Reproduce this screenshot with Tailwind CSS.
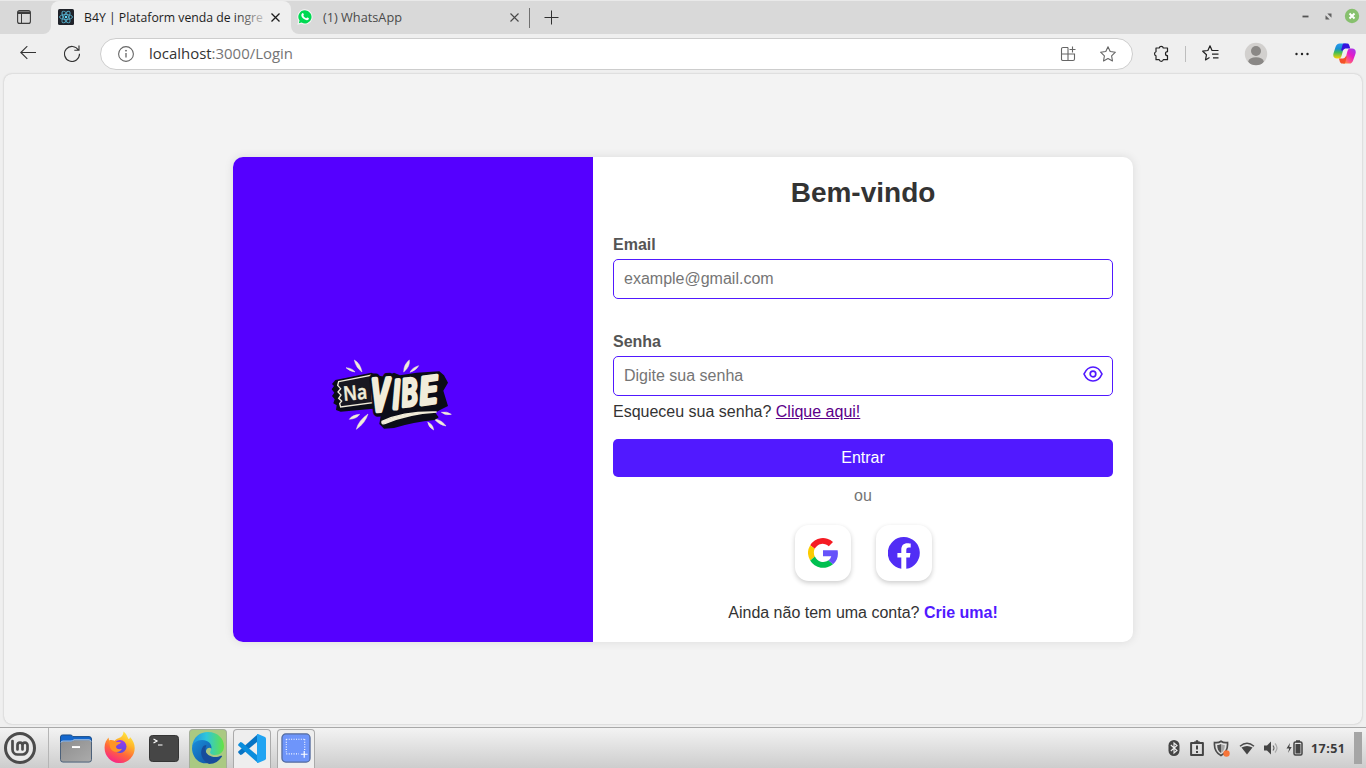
<!DOCTYPE html>
<html lang="pt-BR">
<head>
<meta charset="utf-8">
<title>B4Y | Plataform venda de ingressos</title>
<script src="https://cdn.jsdelivr.net/npm/@tailwindcss/browser@4"></script>
</head>
<body class="flex h-[768px] w-[1366px] flex-col overflow-hidden bg-[#efefef] font-['Liberation_Sans',Arial,sans-serif] text-[#333]">

<!-- Tab strip -->
<div class="flex h-[34px] shrink-0 border-t border-[#e9e9e9] bg-[#efefef] font-['Open_Sans','Noto_Sans',sans-serif]">
  <div class="flex w-[51px] rounded-br-lg bg-[#d9d9d9] pt-[9px] pl-[17px]">
    <svg width="14" height="14" viewBox="0 0 14 14" fill="none" stroke="#3b3b3b"><rect x=".6" y=".6" width="12.8" height="12.8" rx="2" stroke-width="1.1"/><path d="M1 2.3h12M1 3.3h12" stroke-width="1.5"/><path d="M4.5 4v9"/></svg>
  </div>
  <div class="bg-[#d9d9d9]">
    <div class="flex h-[33px] w-[240px] items-center rounded-t-lg bg-[#efefef] pl-[7px]">
      <svg class="-mt-px shrink-0" width="16" height="16" viewBox="0 0 32 32"><rect width="32" height="32" rx="3" fill="#20232a"/><g fill="none" stroke="#53a9c5" stroke-width="1.9"><ellipse cx="16" cy="16" rx="13" ry="5"/><ellipse cx="16" cy="16" rx="13" ry="5" transform="rotate(60 16 16)"/><ellipse cx="16" cy="16" rx="13" ry="5" transform="rotate(120 16 16)"/></g><circle cx="16" cy="16" r="2.5" fill="#61dafb"/></svg>
      <svg class="ml-[10px] shrink-0" width="183" height="24" viewBox="0 0 183 24"><defs><linearGradient id="fade" gradientUnits="userSpaceOnUse" x1="150" x2="182" y1="0" y2="0"><stop stop-color="#1b1b1b"/><stop offset="1" stop-color="#1b1b1b" stop-opacity=".15"/></linearGradient></defs><text x="0" y="15.500" font-size="12.500" textLength="179" lengthAdjust="spacingAndGlyphs" fill="url(#fade)">B4Y | Plataform venda de ingre</text></svg>
      <svg class="ml-[4px] shrink-0" width="9" height="9" viewBox="0 0 9 9" stroke="#1c1c1c" stroke-width="1.300"><path d="M.5.5l8 8M8.500.5l-8 8"/></svg>
    </div>
  </div>
  <div class="flex flex-1 items-center rounded-bl-lg bg-[#d9d9d9] pl-[6px]">
    <svg class="-mt-px" width="16" height="16" viewBox="0 0 16 16"><path d="M8 .3a7.600 7.600 0 1 1-3.500 14.400L.4 15.700l1-4A7.600 7.600 0 0 1 8 .3z" fill="#f6f6f6"/><path d="M8 1.300a6.600 6.600 0 1 1-3.400 12.300L1.800 14.300l.7-2.700A6.600 6.600 0 0 1 8 1.300z" fill="#00d952"/><path d="M4.800 4.800c.6-1 1.400-.8 1.700 0 .5 1 .4 1.100-.2 1.900.7 1.300 1.500 2 2.900 2.600.8-.8.800-1.100 1.500-.7 1.500.6 1.300.8 1 1.600-.6 1-2 1.200-3.300.6-2-.8-3.300-2.200-4-3.800-.2-.7-.1-1.500.4-2.200z" fill="#fff"/></svg>
    <svg class="ml-[10px]" width="90" height="24" viewBox="0 0 90 24"><text x="0" y="15.500" font-size="12.500" textLength="79" lengthAdjust="spacingAndGlyphs" fill="#4a4a4a">(1) WhatsApp</text></svg>
    <svg class="ml-[97px]" width="9" height="9" viewBox="0 0 9 9" stroke="#484848" stroke-width="1.100"><path d="M.5.5l8 8M8.500.5l-8 8"/></svg>
    <div class="ml-[10px] h-5 w-px bg-[#707070]"></div>
    <svg class="-mt-px ml-[14px]" width="15" height="15" viewBox="0 0 15 15" stroke="#303030"><path d="M7.500.5v14M.5 7.500h14"/></svg>
    <div class="-mt-[3px] ml-auto flex items-center pr-[6px]">
      <svg width="7" height="7" viewBox="0 0 7 7"><path d="M.5 3.500h6" stroke="#555" stroke-width="1.800"/></svg>
      <svg class="ml-[16px]" width="7" height="7" viewBox="0 0 7 7" fill="#606060"><path d="M2.300.5h4.200v4.200zM.5 2.300v4.200h4.200z"/></svg>
      <svg class="ml-[12px]" width="16" height="16" viewBox="0 0 16 16"><circle cx="8" cy="8" r="7.200" fill="#87c06e"/><path d="M5.500 5.500l5 5m0-5l-5 5" stroke="#fff" stroke-width="2"/></svg>
    </div>
  </div>
</div>

<!-- Toolbar -->
<div class="flex h-[39px] shrink-0 items-center pl-[20px] font-['Open_Sans','Noto_Sans',sans-serif]">
  <svg class="-mt-px" width="16" height="14" viewBox="0 0 16 14" fill="none" stroke="#333" stroke-width="1.100"><path d="M16 6.500H.8M7.300.2L.8 6.500l6.500 6.400"/></svg>
  <svg class="-mt-px ml-[28px]" width="16" height="17" viewBox="0 0 16 17" fill="none" stroke="#333" stroke-width="1.150"><path d="M14.500 5.200A7.500 7.500 0 1 0 15.500 8.700M15 .5v4.700h-4.700"/></svg>
  <div class="mt-px ml-[20px] flex h-[32px] w-[1033px] items-center rounded-full border border-[#cdcdcd] bg-white pl-[17px]">
    <svg width="16" height="16" viewBox="0 0 16 16" fill="none" stroke="#666"><circle cx="8" cy="8" r="7.400" stroke-width="1.100"/><path d="M8 7v4.500" stroke-width="1.300"/><circle cx="8" cy="4.700" r=".5" fill="#666"/></svg>
    <svg class="ml-[15px]" width="160" height="28" viewBox="0 0 160 28"><text x="0" y="18.500" font-size="14.800" fill="#333" textLength="144" lengthAdjust="spacingAndGlyphs">localhost<tspan fill="#757575">:3000/Login</tspan></text></svg>
    <svg class="ml-auto" width="16" height="16" viewBox="0 0 16 16" fill="none" stroke="#666" stroke-width="1.100"><path d="M8 1.500H3a1.500 1.500 0 0 0-1.500 1.500v10.500A1.500 1.500 0 0 0 3 14.500h10a1.500 1.500 0 0 0 1.500-1.500V8H1.500M8 1.500V14.500M12.500 .5v6M9.500 3.500h6"/></svg>
    <svg class="mr-[16px] ml-[24px]" width="16" height="16" viewBox="0 0 16 16" fill="none" stroke="#666" stroke-width="1.100" stroke-linejoin="round"><path d="M8 .8l2.200 4.700 5.200.7-3.800 3.600.9 5.200L8 12.500 3.500 15l.9-5.200L.6 6.200l5.200-.7z"/></svg>
  </div>
  <svg class="ml-[20px]" width="17" height="17" viewBox="0 0 17 17" fill="none" stroke="#222" stroke-width="1.200" stroke-linejoin="round"><path d="M3 3h3.200a2.100 2.100 0 0 1 4.100 0H14.500v3.700a2 2 0 0 0 0 4v4H10.300a2.100 2.100 0 0 1-4.100 0H3v-4a2.100 2.100 0 0 1 0-4z"/></svg>
  <div class="ml-[15px] h-4 w-px bg-[#bdbdbd]"></div>
  <svg class="-mt-px ml-[16px]" width="17" height="17" viewBox="0 0 17 17" fill="none" stroke="#222" stroke-width="1.200" stroke-linejoin="round"><path d="M11.200 5.500H10L8 .8 5.900 5.500l-5.200.7 3.800 3.500-1 5.200 4-2.300M11 5.500h5.500M10 9.200h6.500M11 12.800h5.500"/></svg>
  <svg class="ml-[25px]" width="24" height="24" viewBox="0 0 24 24"><clipPath id="avatar"><circle cx="12" cy="12" r="11.200"/></clipPath><circle cx="12" cy="12" r="11.200" fill="#d2d0ce"/><g fill="#8a8886" clip-path="url(#avatar)"><circle cx="12" cy="9" r="5"/><ellipse cx="12" cy="19.500" rx="7.700" ry="4.200"/></g></svg>
  <svg class="ml-[27px]" width="14" height="4" viewBox="0 0 14 4" fill="#222"><circle cx="1.500" cy="2" r="1.200"/><circle cx="7" cy="2" r="1.200"/><circle cx="12.500" cy="2" r="1.200"/></svg>
  <svg class="ml-[24px]" width="23" height="21" viewBox="0 0 23 21"><defs><linearGradient id="cpa" x2="0" y2="1"><stop stop-color="#2a9bf0"/><stop offset=".35" stop-color="#168fd0"/><stop offset=".6" stop-color="#43bd55"/><stop offset="1" stop-color="#ffd000"/></linearGradient><linearGradient id="cpb" x1="1" x2=".2" y2="1"><stop stop-color="#9b3cf0"/><stop offset=".45" stop-color="#e51bc8"/><stop offset=".8" stop-color="#ff5f78"/><stop offset="1" stop-color="#ff9b3d"/></linearGradient></defs><path d="M6.500.5h7C11 1.500 11 4 10 7.500L8.500 13c-.5 1.700-1.500 2.500-3 2.500H4C.8 15.500-.4 13 .6 10l2-6.200C3.500 1.300 5 .5 6.500.5z" fill="url(#cpa)"/><path d="M10.500.5h3.700c2 0 2.300 2 3 5h-3.500c-2 0-3 .5-3.700 2h-2l1-3.500c.4-1.500.5-2.500 1.500-3.500z" fill="#3512df"/><path d="M16.500 20.500H9.500c2.500-1 2.500-4 3.500-7l1.500-5.500c.5-1.700 1.500-2.500 3-2.500H19c3.200 0 4.400 2.500 3.400 5.500l-2.200 6.200c-.8 2.500-2 3.300-3.700 3.300z" fill="url(#cpb)"/><path d="M12 20.500H9c-2 0-2.300-2.500-3-5h4c1.200 0 2-.8 2.500-2h1.300l-1 4c-.3 1-.4 2-.8 3z" fill="#f45028"/></svg>
</div>

<!-- Page -->
<main class="mx-[4px] mt-px flex h-[650px] shrink-0 justify-center rounded-lg bg-[#f3f3f3] pt-[83px] shadow-[0_0_2px_rgba(0,0,0,0.25)]">
  <section class="flex h-[485px] w-[900px] overflow-hidden rounded-[10px] bg-white shadow-[0_0_10px_rgba(0,0,0,0.1)]">
    <div class="w-[360px] bg-[#5500ff] pt-[193px] pl-[87px]">
      <svg width="140" height="90" viewBox="0 0 420 270">
        <path d="M78 53q20 2 27 13-18-3-27-13zM103 30q18 10 23 36-19-14-23-36zM268 30q3 20-17 36 0-23 17-36zM296 47q-6 13-26 20 6-14 26-20zM119 193q-8 13-31 15 8-13 31-15zM144 192q-8 27-35 46 6-26 35-46zM364 187q16-4 30 6-17 5-30-6zM342 206q24 4 36 22-22-4-36-22zM323 216q17 8 18 24-15-7-18-24z" fill="#f1ecda" stroke="#f1ecda" stroke-width="1.500"/>
        <path d="M46 90L154 68L168 76L195 80L222 68L240 76L290 68L358 64L372 76L384 98L370 122L384 168L360 180L346 188L356 202L344 210Q280 216 222 234L192 236L178 222L182 198L168 192L160 176L62 185L48 180L50 166L40 160L44 148L36 138L43 128L35 118L42 108L36 102Z" fill="#0b0d18"/>
        <path d="M56 95L152 76L158 158L62 171L59 161L65 153L56 145L63 135L54 126L62 116L53 106Z" fill="#191821" stroke="#f1ecda" stroke-width="4"/>
        <text x="71" y="152" transform="rotate(-5 71 152)" font-family="Open Sans, sans-serif" font-weight="600" font-size="60" textLength="72" lengthAdjust="spacingAndGlyphs" fill="#f1ecda" stroke="#f1ecda" stroke-width="1.500">Na</text>
        <!-- Brush lettering with its heavy dark edge -->
        <g font-family="Open Sans, Liberation Sans, sans-serif" font-weight="600" font-style="italic" stroke-linejoin="round" fill="#f1ecda" stroke="#f1ecda" stroke-width="14">
          <text transform="translate(156 184) rotate(-3) scale(.68 1)" font-size="134" stroke="#0b0d18" stroke-width="34" fill="#0b0d18">V</text>
          <text transform="translate(156 184) rotate(-3) scale(.68 1)" font-size="134">V</text>
          <text transform="translate(219 175) rotate(-3) scale(.66 1)" font-size="116">I</text>
          <text transform="translate(246 170) rotate(-7) scale(.74 1)" font-size="114" stroke-width="10">B</text>
          <text transform="translate(300 164) rotate(-8) scale(.98 1)" font-size="112" stroke-width="11">E</text>
        </g>
        <path d="M186 214Q250 184 350 186Q262 191 194 221Q184 223 186 214Z" fill="#f1ecda" stroke="#f1ecda" stroke-width="4"/>
      </svg>
    </div>
    <div class="flex w-[540px] flex-col px-5 pt-[19px]">
      <h1 class="text-center text-[28px] leading-[33px] font-bold">Bem-vindo</h1>
      <label class="mt-[27px] text-base leading-[18px] font-bold text-[#555]">Email</label>
      <div class="mt-[5px] flex h-[40px] items-center rounded-[5px] border border-[#5119ff] px-[10px] text-base text-[#757575]">example@gmail.com</div>
      <label class="mt-[34px] text-base leading-[18px] font-bold text-[#555]">Senha</label>
      <div class="mt-[5px] flex h-[40px] items-center justify-between rounded-[5px] border border-[#5119ff] pr-[9px] pl-[10px] text-base text-[#757575]">
        <span>Digite sua senha</span>
        <svg class="mb-1" width="20" height="16" viewBox="0 0 20 16" fill="none" stroke="#5119ff" stroke-width="1.700"><path d="M1 8c2-4.500 5-7 9-7s7 2.500 9 7c-2 4.500-5 7-9 7s-7-2.500-9-7z" stroke-linejoin="round"/><circle cx="10" cy="8" r="2.800"/></svg>
      </div>
      <p class="mt-[7px] text-base leading-[18px]">Esqueceu sua senha? <a class="text-[#5c0089] underline">Clique aqui!</a></p>
      <button class="mt-[18px] h-[38px] rounded-[5px] bg-[#5119ff] text-base text-white">Entrar</button>
      <p class="mt-[10px] text-center text-base leading-[18px] text-[#757575]">ou</p>
      <div class="mt-[20px] flex justify-center gap-[25px]">
        <div class="flex size-[56px] items-center justify-center rounded-[14px] bg-white shadow-[0_2px_5px_rgba(0,0,0,0.2)]">
          <svg width="30" height="30" viewBox="0 0 30 30"><path d="M2.200 7.200A15 15 0 0 1 25 3.900l-4.200 4.300A9 9 0 0 0 6.700 10.800z" fill="#f51b23"/><path d="M2.200 7.200a15 15 0 0 0 0 15.200l4.700-3.800a9 9 0 0 1-.2-7.800z" fill="#fccb00"/><path d="M2.200 22.400A15 15 0 0 0 25 26.200l-4.500-4A9 9 0 0 1 6.900 18.600z" fill="#00c050"/><path d="M15 12.300h14.600c1 5.500-.3 10.500-4.600 13.900l-4.500-4a6.900 6.900 0 0 0 2.800-4H15z" fill="#6652fa"/></svg>
        </div>
        <div class="flex size-[56px] items-center justify-center rounded-[14px] bg-white shadow-[0_2px_5px_rgba(0,0,0,0.2)]">
          <svg width="32" height="32" viewBox="0 0 32 32"><path d="M16 0a16 16 0 0 0-2.700 31.800V20.600H9.400V16h3.900v-3.400c0-4.200 2.400-6.400 6-6.400 1.700 0 3.400.3 3.400.3v3.900h-1.900c-2 0-2.500 1.200-2.500 2.500V16h4.200l-.7 4.600h-3.500v11.200A16 16 0 0 0 16 0z" fill="#512df5"/></svg>
        </div>
      </div>
      <p class="mt-[23px] text-center text-base leading-[18px]">Ainda não tem uma conta? <a class="font-bold text-[#5119ff]">Crie uma!</a></p>
    </div>
  </section>
</main>

<!-- Desktop panel -->
<footer class="mt-[3px] flex h-[41px] shrink-0 border-t border-[#a8a8a8] bg-linear-to-b from-[#f3f3f3] to-[#cdcdcd]">
  <div class="flex w-[49px] items-center border-r border-[#b5b5b5] pl-[4px]">
    <svg width="32" height="32" viewBox="0 0 32 32" fill="none" stroke="#4b4b4b"><circle cx="16" cy="16" r="14.500" stroke-width="3" fill="#e9e9e9"/><g stroke-width="2.700" stroke-linecap="round"><path d="M8.500 9v8.500a5 5 0 0 0 5 5h5a5 5 0 0 0 5-5v-4.300a2.500 2.500 0 0 0-5 0v4.300M18.500 17.500v-4.300a2.500 2.500 0 0 0-5 0v4.300"/></g></svg>
  </div>
  <div class="flex items-center pl-[11px]">
    <svg class="mt-px" width="32" height="30" viewBox="0 0 32 31" preserveAspectRatio="none"><defs><linearGradient id="folder" x2="1" y2="1"><stop stop-color="#8d8d8d"/><stop offset="1" stop-color="#ababab"/></linearGradient></defs><path d="M.5 3q0-2 2-2h8q1.500 0 2.500 1.700h16q2.500 0 2.500 2.500V11H.5z" fill="#1467cd" stroke="#174b87"/><path d="M.5 10q0-2.500 2.500-2.500h8q1.500 0 3-1.500H29q2.500 0 2.500 2.500v18q0 2.500-2.500 2.500H3Q.5 29 .5 26.500z" fill="url(#folder)" stroke="#495f78"/><path d="M1 9q0-1.700 2-1.700h8q1.500 0 3-1.300h15q2 0 2 2" fill="none" stroke="#a7cfff"/><path d="M12 13.500h8" stroke="#fff" stroke-width="2"/></svg>
    <svg class="-mt-0.5 ml-[12px]" width="31" height="32" viewBox="0 0 31 32"><defs><linearGradient id="fox" x1=".8" x2=".3" y2="1"><stop stop-color="#fff044"/><stop offset=".35" stop-color="#ffb329"/><stop offset=".65" stop-color="#ff673a"/><stop offset="1" stop-color="#f8208c"/></linearGradient><linearGradient id="foxin" x2="0" y2="1"><stop stop-color="#9c3bea"/><stop offset="1" stop-color="#554be0"/></linearGradient></defs><path d="M19.500.5c3 2 3.500 5 5 7.500 1.500-.2 1.500-1.500 1.500-2 3 3 4.700 7 4.700 11A15 15 0 0 1 .6 17C.4 12 2.500 9 4.500 6.500l.8 4 5-.2C12.500 7 15 7.500 17 6c1.500-1.300 2.500-3 2.500-5.500z" fill="url(#fox)"/><circle cx="16" cy="15.500" r="6.500" fill="url(#foxin)"/><path d="M5 9.500c3-1 5.500 0 7 1.500h5c-1 2.500-4 2.200-5 4.500-.2 2 2.500 3.500 6 2.300-2.500 5-9.500 4-12-1.300z" fill="#ff9525"/></svg>
    <svg class="ml-[14px]" width="30" height="27" viewBox="0 0 30 27"><rect x=".5" y=".5" width="29" height="26" rx="3" fill="#464646" stroke="#353535"/><path d="M4.500 4l3.500 2-3.500 2M9 10h4.500" fill="none" stroke="#fff" stroke-width="1.200"/></svg>
  </div>
  <div class="ml-[10px] flex items-end gap-[6px]">
    <div class="flex h-[39px] w-[38px] justify-center rounded-t border border-b-0 border-[#a4ae9a] bg-[#aac982] pt-[2px]">
      <svg width="32" height="32" viewBox="0 0 32 32"><defs><linearGradient id="edgeTop"><stop stop-color="#2192df"/><stop offset=".45" stop-color="#2ec6dc"/><stop offset="1" stop-color="#64e343"/></linearGradient><linearGradient id="edgeMid" x2="1" y2="1"><stop stop-color="#198eda"/><stop offset="1" stop-color="#1050a0"/></linearGradient></defs><path d="M0 15C1 5 8 0 16 0c10 0 16 7 16 14 0 6-4 9-9 9-3 0-6-1.500-4.500-4 1.500-3-1-7-6-7C7 11.500 2 11 0 15z" fill="url(#edgeTop)"/><path d="M0 16c.5-5 5-8 10-8 6 0 10 4 9.500 8.500-3-2.500-6.500 1-5.500 5C15 26 19 27.500 23 27c-4 5-10 5-14 3.500C3 28 0 22 0 16z" fill="url(#edgeMid)"/><path d="M11.500 14c-5 6-1.500 15 5.500 18 6 0 10-3 13-7.500.5-1-.5-1-1.200-.7C23 27 13 24 13.500 17c0-1.500.5-2.500 1-3.500-1-.5-2-.3-3 .5z" fill="#174d9b"/></svg>
    </div>
    <div class="flex h-[39px] w-[38px] justify-center rounded-t border border-b-0 border-[#aaa] bg-[#eee] pt-[4px]">
      <svg width="28" height="29" viewBox="0 0 28 29"><path d="M20 0l-1 8L4 20.500 2.500 21 .5 19q-.7-1 0-1.700z" fill="#0874c4"/><path d="M20 29l-1-8L4 8.500 2.500 8 .5 10q-.7 1 0 1.700z" fill="#098ddd"/><path d="M20 0l7 3q1 .6 1 1.700v19.600q0 1-1 1.700l-7 3q-1 .2-1-1V1q0-1.200 1-1z" fill="#20a4f2"/></svg>
    </div>
    <div class="flex h-[39px] w-[38px] justify-center rounded-t border border-b-0 border-[#aaa] bg-[#eee] pt-[3px]">
      <svg width="30" height="30" viewBox="0 0 31 31" fill="none"><rect x="1" y="1" width="29" height="29" rx="4" fill="#6e95fa" stroke="#526a9e" stroke-width="1.300"/><path d="M5.500 6.500h19M5.500 6.500v15M24.500 6.500v12M5.500 21.500h13" stroke="#fff" stroke-width="1.200" stroke-dasharray="1 1.500"/><path d="M24 18.500v7M20.500 22h7" stroke="#fff" stroke-width="1.200"/></svg>
    </div>
  </div>
  <div class="ml-auto flex items-center pr-[4px]">
    <svg width="12" height="16" viewBox="0 0 12 16"><rect x=".5" width="11" height="16" rx="5.500" fill="#444"/><path d="M2.800 5L9 10.500 6 13V3l3 2.500L2.800 11" fill="none" stroke="#eee" stroke-width="1.100"/></svg>
    <svg class="ml-[10px]" width="14" height="16" viewBox="0 0 14 16"><path d="M1.100 3h11.800v12H1.100z" fill="none" stroke="#444" stroke-width="2" stroke-linejoin="round"/><path d="M4 4V1.500h1.500a1.500 1.500 0 0 1 3 0H10V4z" fill="#444"/><path d="M7 5.500v4M7 11v2" stroke="#444" stroke-width="2"/></svg>
    <svg class="ml-[9px]" width="17" height="17" viewBox="0 0 17 17"><path d="M8 1.200c2 1.500 4.500 1.700 6.500 1.300C15 8.500 13 13 8 15.500 3 13 1 8.500 1.500 2.500c2 .4 4.500.2 6.500-1.300z" fill="none" stroke="#4b4b4b" stroke-width="1.700"/><path d="M8 4c-1.300.8-2.500 1-3.800 1 0 3.700 1 6.200 3.800 8z" fill="#505050"/><path d="M8 4c1.300.8 2.500 1 3.800 1 0 3.700-1 6.200-3.800 8z" fill="#a5a5a5"/><circle cx="13.500" cy="13.500" r="3.200" fill="#f77539"/></svg>
    <svg class="ml-[9px]" width="16" height="13" viewBox="0 0 16 13"><path d="M1 4.200Q8-1.700 15 4.200" fill="none" stroke="#4a4a4a" stroke-width="1.500"/><path d="M2.500 5.500Q8 2.500 13.500 5.500L8 12.500z" fill="#444"/></svg>
    <svg class="ml-[8px]" width="16" height="14" viewBox="0 0 16 14" fill="none"><path d="M1 4.500h3l4-4v13l-4-4H1z" fill="#444"/><path d="M10 4.500q2 2.500 0 5" stroke="#666" stroke-width="1.100"/><path d="M12 2.500q4 4.500 0 9" stroke="#aaa" stroke-width="1.200"/></svg>
    <svg class="ml-[7px]" width="18" height="16" viewBox="0 0 18 16"><path d="M4 3L.5 8.500h2.700L2 13l3.700-6H3.300z" fill="#444"/><rect x="8" y="2" width="8" height="13" rx="1.500" fill="none" stroke="#444" stroke-width="1.500"/><path d="M10 .3h4v2h-4zM9.500 4h5v9.500h-5z" fill="#444"/></svg>
    <svg class="ml-[7px]" width="36" height="20" viewBox="0 0 36 20"><text x="0" y="14.500" font-family="Noto Sans, Open Sans, sans-serif" font-size="12.500" font-weight="700" textLength="34" lengthAdjust="spacing" fill="#3b3b3b">17:51</text></svg>
    <div class="ml-[7px] h-[32px] w-[8px] bg-[#a5a5a5]"></div>
  </div>
</footer>
</body>
</html>
